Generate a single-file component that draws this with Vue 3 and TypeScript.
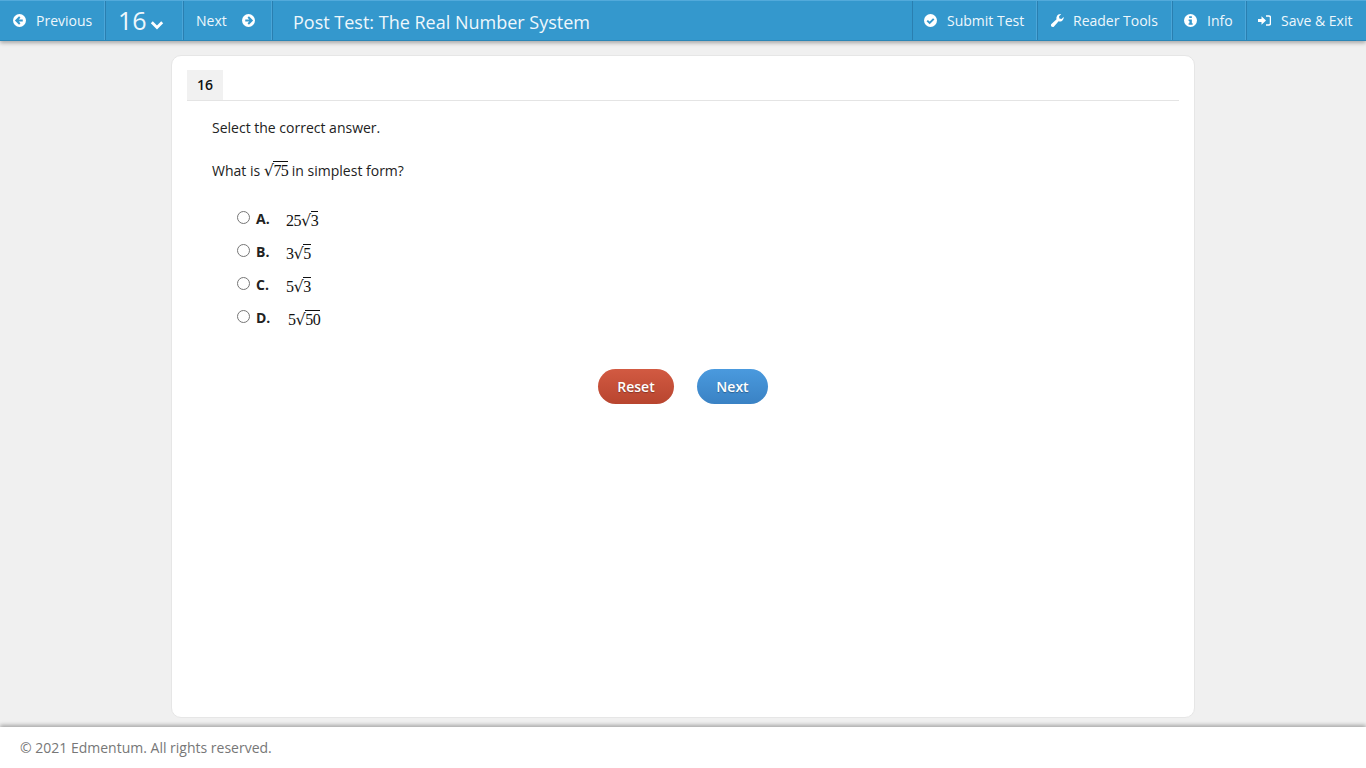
<script setup lang="ts">
type Choice = { letter: string; coef: string; root: string; gap: string };

const choices: Choice[] = [
  { letter: "A.", coef: "25", root: "3", gap: "a" },
  { letter: "B.", coef: "3", root: "5", gap: "b" },
  { letter: "C.", coef: "5", root: "3", gap: "c" },
  { letter: "D.", coef: "5", root: "50", gap: "d" },
];
</script>

<template>
  <div class="page">
    <header class="toolbar">
      <div class="tool prev">
        <svg class="icon" viewBox="0 0 24 24">
          <circle cx="12" cy="12" r="12" fill="#fff" />
          <path d="M12.5 5.5 6 12l6.5 6.5M6.5 12H18" fill="none" stroke="#3498cd" stroke-width="3.6" />
        </svg>
        <span>Previous</span>
      </div>
      <div class="tool number">
        <span class="num">16</span>
        <svg class="chevron" viewBox="0 0 14 10">
          <path d="M1.8 2.2 7 7.4l5.2-5.2" fill="none" stroke="#fff" stroke-width="2.8" />
        </svg>
      </div>
      <div class="tool next">
        <span>Next</span>
        <svg class="icon" viewBox="0 0 24 24">
          <circle cx="12" cy="12" r="12" fill="#fff" />
          <path d="M11.5 5.5 18 12l-6.5 6.5M17.5 12H6" fill="none" stroke="#3498cd" stroke-width="3.6" />
        </svg>
      </div>
      <h1 class="title">Post Test: The Real Number System</h1>
      <div class="tool submit">
        <svg class="icon" viewBox="0 0 24 24">
          <circle cx="12" cy="12" r="12" fill="#fff" />
          <path d="m6 12.2 4.4 4.4L18 9" fill="none" stroke="#3498cd" stroke-width="3.6" />
        </svg>
        <span>Submit Test</span>
      </div>
      <div class="tool reader">
        <svg class="icon wrench" viewBox="0 0 24 24">
          <path d="M23.4 5.6c.4 3.2-1 6.300-4 7.700-2 .9-3.900.8-5.400.2L5.600 22.900c-1.300 1.400-3.300 1.400-4.700.2-1.400-1.300-1.400-3.400-.1-4.700l9.500-8.500c-.6-1.700-.5-3.700.4-5.500C12.200 1.400 15.500-.3 18.800.2l-4 4.300.7 3.900 3.800 1z" fill="#fff" />
        </svg>
        <span>Reader Tools</span>
      </div>
      <div class="tool info">
        <svg class="icon" viewBox="0 0 24 24">
          <circle cx="12" cy="12" r="12" fill="#fff" />
          <path d="M9.500 4h5v3.500h-5zM8.500 10h6v7h1.500v3H8.500v-3H10v-4H8.500z" fill="#3498cd" />
        </svg>
        <span>Info</span>
      </div>
      <div class="tool save">
        <svg class="icon door" viewBox="0 0 26 24">
          <path d="M0 9h7V3.500L16 12l-9 8.500V15H0z" fill="#fff" />
          <path d="M16 3h5.500C23.500 3 25 4.500 25 6.500v11c0 2-1.500 3.500-3.500 3.500H16" fill="none" stroke="#fff" stroke-width="3" />
        </svg>
        <span>Save &amp; Exit</span>
      </div>
    </header>

    <main class="content">
      <section class="card">
        <div class="card-head">
          <span class="tab">16</span>
        </div>
        <div class="question">
          <p class="prompt">Select the correct answer.</p>
          <p class="stem">
            What is <span class="math big"><span class="radical">√</span><span class="radicand">75</span></span> in simplest form?
          </p>
          <ul class="choices">
            <li v-for="c in choices" :key="c.letter" class="choice">
              <span class="radio"></span>
              <span class="letter">{{ c.letter }}</span>
              <span class="math" :class="c.gap">{{ c.coef }}<span class="radical">√</span><span class="radicand">{{ c.root }}</span></span>
            </li>
          </ul>
          <div class="actions">
            <button class="btn reset">Reset</button>
            <button class="btn go">Next</button>
          </div>
        </div>
      </section>
    </main>

    <footer class="footer">© 2021 Edmentum. All rights reserved.</footer>
  </div>
</template>

<style scoped>
.page {
  height: 768px;
  display: flex;
  flex-direction: column;
  background: #f0f0f0;
  font-family: "Open Sans", sans-serif;
  color: #222;
  overflow: hidden;
}

.toolbar {
  height: 41px;
  flex: none;
  display: flex;
  background: #3498cd;
  border-top: 1px solid #52aadb;
  box-sizing: border-box;
  border-bottom: 1px solid #2c86b6;
  box-shadow: 0 2px 4px rgba(0, 0, 0, 0.3);
  color: #fff;
  font-size: 14px;
  position: relative;
}

.tool {
  display: flex;
  align-items: center;
  box-sizing: border-box;
  border-right: 1px solid #2a7fb0;
  box-shadow: inset -1px 0 0 #4ba6d8;
  color: #eef7fc;
}

.icon {
  width: 13px;
  height: 13px;
  flex: none;
}

.prev { width: 106px; padding-left: 13px; gap: 10px; }
.number { width: 78px; padding-left: 12px; }
.next { width: 89px; padding-left: 12px; gap: 15px; }
.submit { width: 126px; padding-left: 11px; gap: 10px; border-left: 1px solid #2a7fb0; }
.reader { width: 135px; padding-left: 13px; gap: 9px; }
.info { width: 74px; padding-left: 11px; gap: 10px; }
.save { width: 119px; padding-left: 11px; gap: 10px; border-right: none; box-shadow: none; }

.num {
  font-size: 25px;
  line-height: 1;
}

.chevron {
  width: 14px;
  height: 10px;
  margin: 8px 0 0 3px;
}

.title {
  flex: 1;
  margin: 0;
  padding-left: 20px;
  font-size: 18px;
  font-weight: 400;
  line-height: 42px;
  color: #eef7fc;
}

.content {
  flex: 1;
  display: flex;
  min-height: 0;
  justify-content: center;
  padding: 14px 0 9px;
}

.card {
  width: 1024px;
  box-sizing: border-box;
  padding: 14px 15px;
  background: #fff;
  border: 1px solid #e6e6e6;
  border-radius: 10px;
}

.card-head {
  height: 31px;
  box-sizing: border-box;
  border-bottom: 1px solid #e4e4e4;
}

.tab {
  display: block;
  width: 36px;
  height: 30px;
  background: #f1f1f1;
  text-align: center;
  font-size: 14px;
  font-weight: 600;
  line-height: 29px;
  color: #111;
}

.question {
  padding: 17px 25px 0;
  font-size: 14px;
  line-height: 20px;
}

.prompt {
  margin: 0;
}

.stem {
  margin: 23px 0 0;
}

.math {
  font-family: "Liberation Serif", serif;
  font-size: 16px;
  letter-spacing: -0.5px;
  color: #111;
}

.math.big {
  letter-spacing: -0.6px;
}

.radical {
  font-family: "DejaVu Sans", sans-serif;
}

.radicand {
  border-top: 1px solid #111;
}

.choices {
  list-style: none;
  margin: 21px 0 0;
  padding: 0 0 0 25px;
}

.choice {
  height: 33px;
  display: flex;
  align-items: center;
}

.radio {
  width: 11px;
  height: 11px;
  flex: none;
  border: 1px solid #767676;
  border-radius: 50%;
  background: #fff;
  margin-top: -2px;
}

.letter {
  width: 30px;
  margin-left: 6px;
  font-weight: 700;
}

.letter + .d {
  margin-left: 2px;
}

.math.a, .math.b, .math.c, .math.d {
  margin-top: 5px;
}

.actions {
  display: flex;
  justify-content: center;
  gap: 23px;
  margin-top: 35px;
}

.btn {
  height: 35px;
  padding: 0;
  border: none;
  border-radius: 18px;
  color: #fff;
  font-family: inherit;
  font-size: 14px;
  font-weight: 600;
  text-shadow: 0 1px 1px rgba(0, 0, 0, 0.3);
}

.reset {
  width: 76px;
  background: linear-gradient(#d25a42, #b8452f);
}

.go {
  width: 71px;
  background: linear-gradient(#4a9ade, #3a82c4);
}

.footer {
  height: 41px;
  flex: none;
  box-sizing: border-box;
  padding-left: 20px;
  background: #fff;
  box-shadow: 0 -2px 4px rgba(0, 0, 0, 0.3);
  font-size: 14px;
  line-height: 41px;
  color: #777;
}
</style>
